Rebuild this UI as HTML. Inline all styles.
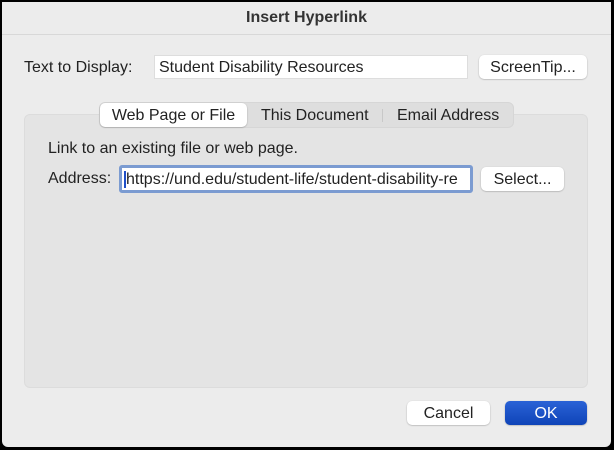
<!DOCTYPE html><html><head><style>
*{box-sizing:border-box;margin:0;padding:0}
body{width:614px;height:450px;background:#000;font-family:"Liberation Sans",sans-serif;font-size:16px;color:#222;position:relative;overflow:hidden}
.win{position:absolute;left:2px;top:2px;width:609px;height:445px;background:#ececec;border-radius:0 0 6px 6px}
.a{position:absolute}
.title{left:0;top:0;width:609px;height:33px;border-bottom:1px solid #d8d8d8;text-align:center;line-height:32px;font-weight:bold;font-size:16px;color:#333}
.field{background:#fff;border:1px solid #ddd;line-height:24px;padding-left:4px}
.btn{background:#fff;border-radius:5px;box-shadow:0 0.5px 1.5px rgba(0,0,0,.3);text-align:center;line-height:25px}
</style></head><body><div class="win">
<div class="a title">Insert Hyperlink</div>
<div class="a" style="left:22px;top:54px;line-height:24px">Text to Display:</div>
<div class="a field" style="left:152px;top:53px;width:314px;height:24px">Student Disability Resources</div>
<div class="a btn" style="left:477px;top:53px;width:108px;height:24px">ScreenTip...</div>
<div class="a" style="left:22px;top:112px;width:564px;height:274px;background:#e4e4e4;border:1px solid #dcdcdc;border-radius:6px"></div>
<div class="a" style="left:97px;top:100px;width:415px;height:26px;background:#dedede;border-radius:6px;border:1px solid #d6d6d6"></div>
<div class="a btn" style="left:98px;top:101px;width:147px;height:24px">Web Page or File</div>
<div class="a" style="left:259px;top:101px;line-height:25px">This Document</div>
<div class="a" style="left:380px;top:107px;width:1px;height:13px;background:#c8c8c8"></div>
<div class="a" style="left:395px;top:101px;line-height:25px">Email Address</div>
<div class="a" style="left:46px;top:136px;line-height:22px">Link to an existing file or web page.</div>
<div class="a" style="left:46px;top:166px;line-height:22px">Address:</div>
<div class="a" style="left:117px;top:163px;width:354px;height:28px;border:3px solid #7b9bd1;border-radius:3px;background:#fff;line-height:23px;padding-left:2px;overflow:hidden;white-space:nowrap"><span style="border-left:2px solid #1f4fc7">https://und.edu/student-life/student-disability-re</span></div>
<div class="a btn" style="left:479px;top:165px;width:83px;height:24px">Select...</div>
<div class="a btn" style="left:405px;top:399px;width:83px;height:24px">Cancel</div>
<div class="a btn" style="left:503px;top:399px;width:82px;height:24px;background:linear-gradient(#2a62d6,#0f44b8);color:#fff">OK</div>
</div></body></html>
